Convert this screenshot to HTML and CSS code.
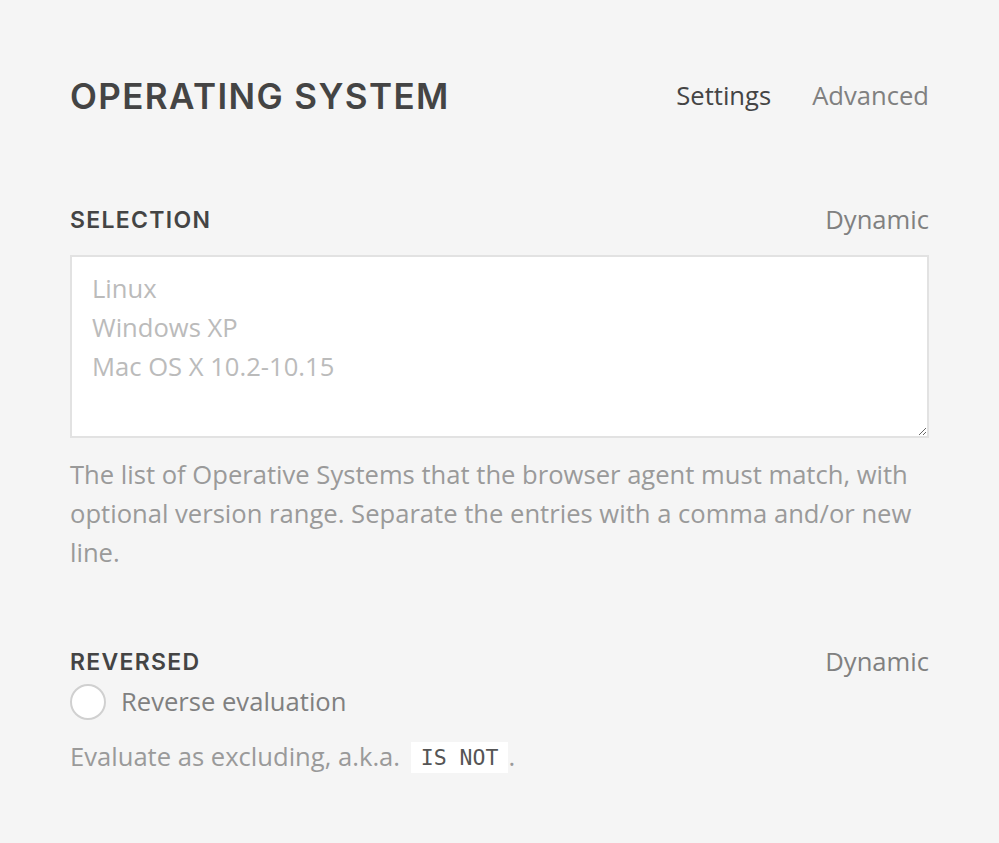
FILE: index.html
```html
<!DOCTYPE html>
<html>
<head>
<meta charset="utf-8">
<link rel="stylesheet" href="styles.css">
</head>
<body>
<div class="page">
  <header class="header">
    <h1 class="title">OPERATING SYSTEM</h1>
    <nav class="tabs">
      <span class="tab tab-active">Settings</span>
      <span class="tab">Advanced</span>
    </nav>
  </header>

  <section class="field field-selection">
    <div class="field-head">
      <h2 class="field-title">SELECTION</h2>
      <span class="field-mode">Dynamic</span>
    </div>
    <textarea class="textarea" placeholder="Linux
Windows XP
Mac OS X 10.2-10.15"></textarea>
    <p class="help help-selection">The list of Operative Systems that the browser agent must match, with optional version range. Separate the entries with a comma and/or new line.</p>
  </section>

  <section class="field field-reversed">
    <div class="field-head">
      <h2 class="field-title">REVERSED</h2>
      <span class="field-mode">Dynamic</span>
    </div>
    <label class="check">
      <span class="radio"></span>
      <span class="check-label">Reverse evaluation</span>
    </label>
    <p class="help help-reversed">Evaluate as excluding, a.k.a. <code class="code">IS NOT</code>.</p>
  </section>
</div>
</body>
</html>
```

FILE: styles.css
```css
html, body {
  margin: 0;
  padding: 0;
  background: #f5f5f5;
}
body {
  font-family: "Open Sans", "Liberation Sans", sans-serif;
  color: #444;
}
.page {
  padding: 72px 70px 0 70px;
}
.header {
  display: flex;
  align-items: center;
  justify-content: space-between;
  height: 48px;
}
.title {
  margin: 0;
  font-family: "Inter", "Liberation Sans", sans-serif;
  font-weight: 600;
  font-size: 35px;
  letter-spacing: 1.4px;
  line-height: 48px;
  color: #444;
}
.tabs {
  display: flex;
  gap: 41px;
}
.tab {
  font-size: 25.6px;
  line-height: 48px;
  color: #808080;
}
.tab-active {
  color: #444;
}
.field-selection {
  margin-top: 85px;
}
.field-head {
  display: flex;
  justify-content: space-between;
  align-items: center;
  height: 30px;
}
.field-title {
  margin: 0;
  font-family: "Inter", "Liberation Sans", sans-serif;
  font-weight: 600;
  font-size: 23px;
  letter-spacing: 1.3px;
  line-height: 30px;
  color: #444;
}
.field-mode {
  font-size: 25.6px;
  line-height: 30px;
  color: #808080;
}
.textarea {
  display: block;
  box-sizing: border-box;
  width: 100%;
  height: 183px;
  margin-top: 20px;
  padding: 12px 20px;
  border: 2px solid #e2e2e2;
  background: #fff;
  font-family: "Open Sans", "Liberation Sans", sans-serif;
  font-size: 25.6px;
  line-height: 39px;
  color: #444;
  outline: none;
  resize: vertical;
}
.textarea::placeholder {
  color: #bbb;
}
.help {
  margin: 0;
  font-size: 25.6px;
  line-height: 39px;
  color: #9a9a9a;
}
.help-selection {
  margin-top: 17px;
}
.field-reversed {
  margin-top: 75px;
}
.check {
  display: flex;
  align-items: center;
  gap: 15px;
  margin-top: 5px;
  height: 39px;
}
.radio {
  box-sizing: border-box;
  width: 36px;
  height: 36px;
  border: 2px solid #d0d0d0;
  border-radius: 50%;
  background: #fff;
}
.check-label {
  font-size: 25.6px;
  line-height: 39px;
  color: #808080;
}
.help-reversed {
  margin-top: 16px;
}
.code {
  display: inline-block;
  background: #fff;
  padding: 0 10px;
  margin-left: 4px;
  font-family: "DejaVu Sans Mono", "Liberation Mono", monospace;
  font-size: 21.5px;
  line-height: 31px;
  color: #555;
  vertical-align: 1px;
}
```
